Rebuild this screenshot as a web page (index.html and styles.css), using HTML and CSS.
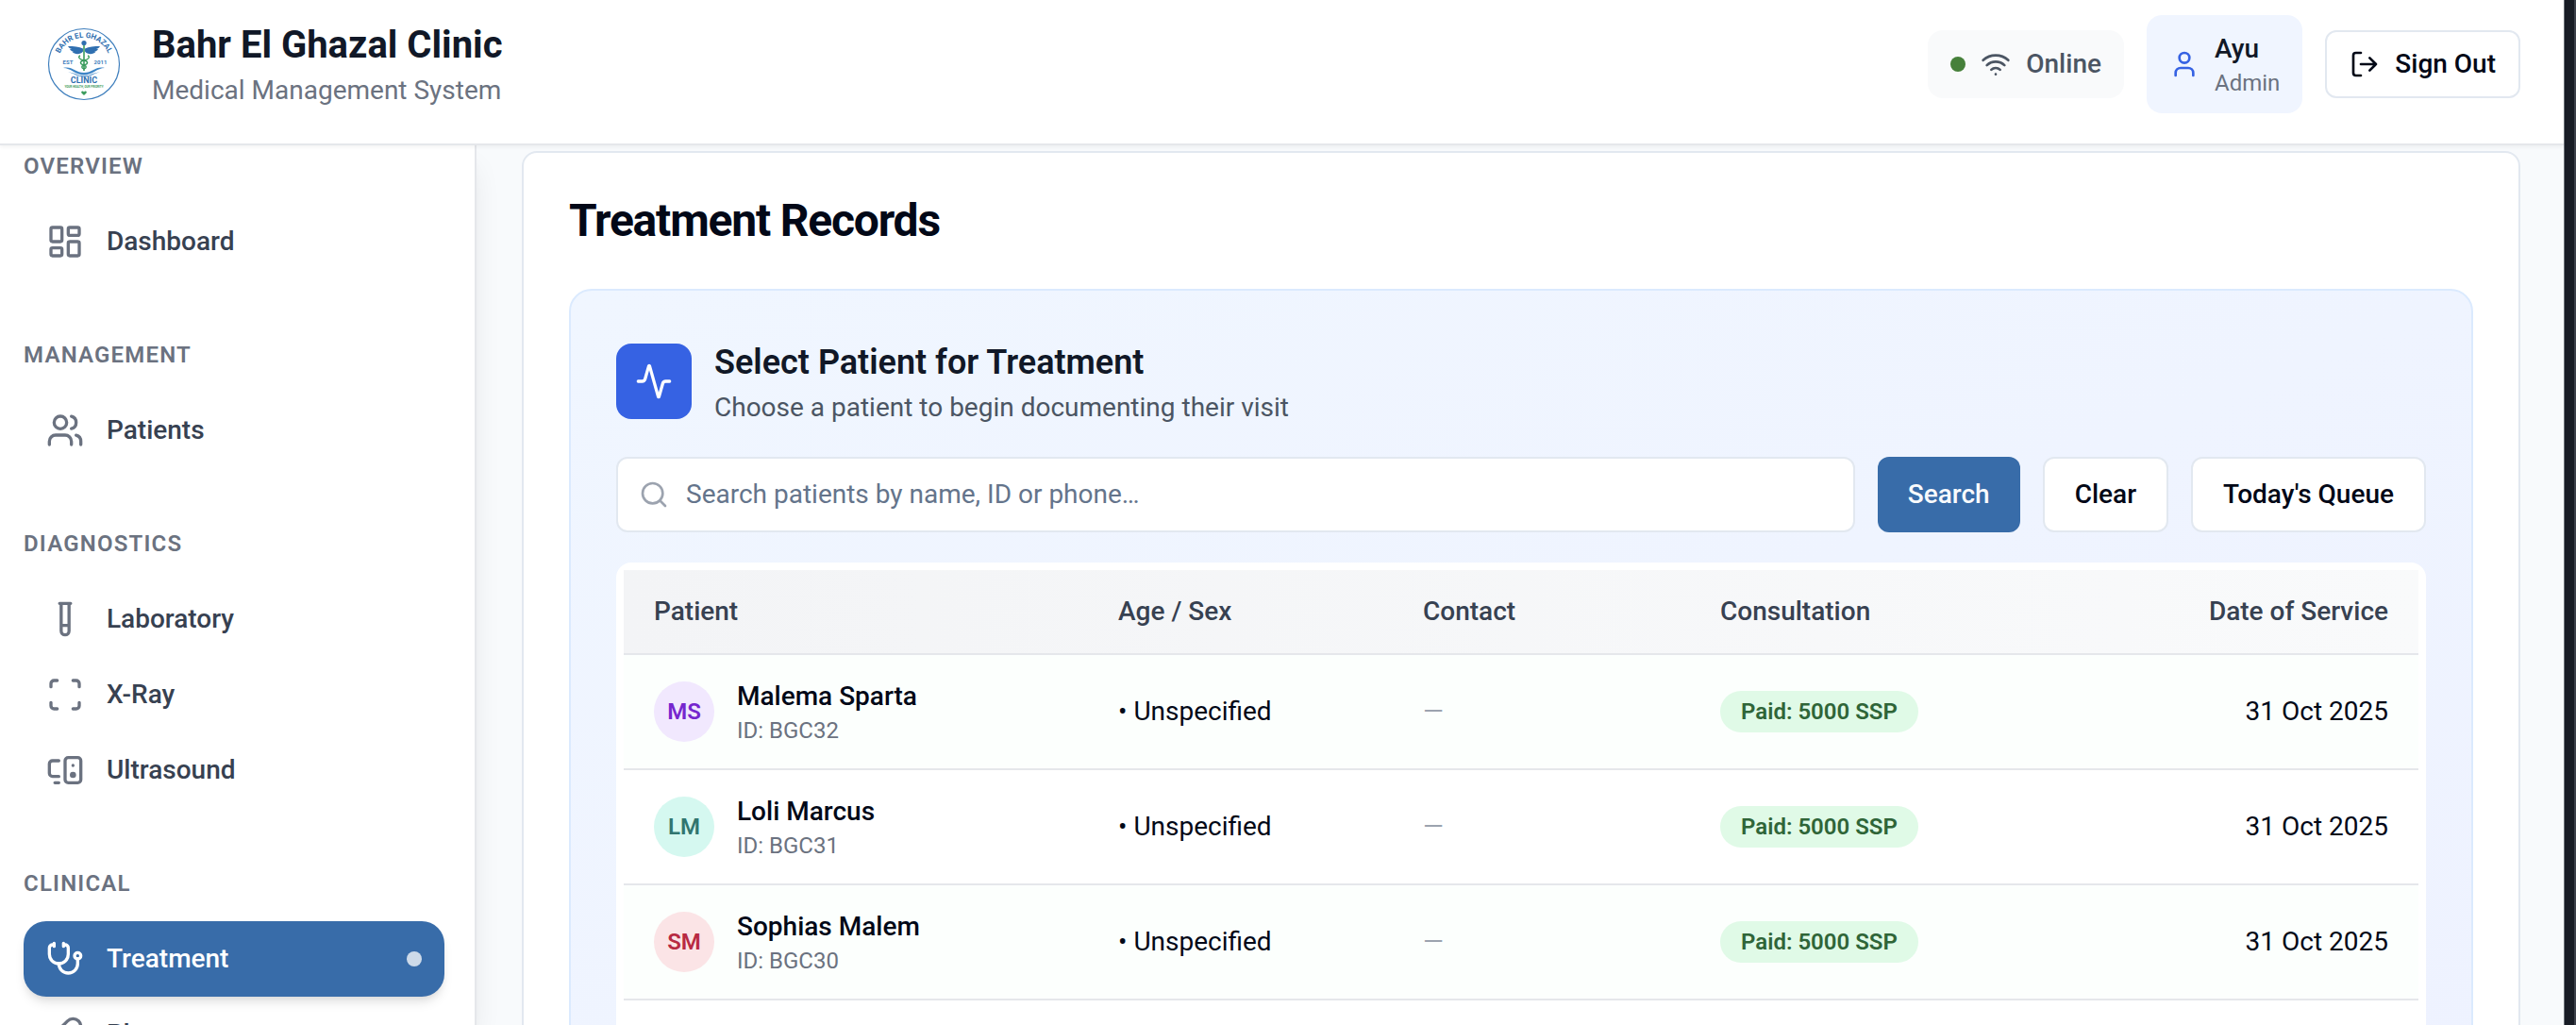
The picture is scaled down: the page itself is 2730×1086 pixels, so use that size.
FILE: index.html
```html
<!DOCTYPE html>
<html lang="en">
<head>
<meta charset="utf-8">
<meta name="viewport" content="width=device-width, initial-scale=1">
<title>Bahr El Ghazal Clinic</title>
<link rel="stylesheet" href="styles.css">
</head>
<body>
<div class="window">
<div class="app">
  <header class="topbar">
    <div class="brand">
      <svg class="brand-logo" viewBox="0 0 80 80" role="img" aria-label="Clinic logo">
        <defs><path id="arc" d="M13.500 45A28 28 0 1 1 68.500 45"/></defs>
        <circle cx="41" cy="40" r="37.500" fill="#fff" stroke="#3f7fbd" stroke-width="1.200"/>
        <text class="logo-arc"><textPath href="#arc" startOffset="50%" text-anchor="middle">BAHR EL GHAZAL</textPath></text>
        <circle cx="41" cy="17.500" r="2.600" fill="#2f6fb0"/>
        <path fill="#2f6fb0" d="M40 23.500c-4-2-10-2.500-16-2.500 1 2 3 2.800 4.500 3-1.200.2-2 .1-2.500 0 1 2 2.800 2.600 4.200 2.600-.8.3-1.300.3-1.800.2 2.500 3.200 9 3.400 11.600-.3zM42 23.500c4-2 10-2.500 16-2.500-1 2-3 2.800-4.500 3 1.200.2 2 .1 2.500 0-1 2-2.800 2.600-4.200 2.600.8.3 1.300.3 1.800.2-2.500 3.200-9 3.400-11.600-.3z"/>
        <path d="M41 20v27" stroke="#3a9b5c" stroke-width="1.600"/>
        <path d="M37 31c-2.500 1-1.500 4 4 5 5 1 4.500 4 0 5-3 1-3 3 0 4M45 31c2.500 1 1.500 4-4 5-5 1-4.500 4 0 5 3 1 3 3 0 4" fill="none" stroke="#3a9b5c" stroke-width="1.400"/>
        <path d="M19 44c9-2.500 13 5 22 5s13-7.500 22-5c-8 0-13 7.500-22 7.500S27 44 19 44z" fill="#3f86c6"/>
        <path d="M24 48.500c7 0 10 4 17 4s10-4 17-4c-7 1-10 5-17 5s-10-4-17-5z" fill="#3f86c6"/>
        <text class="logo-year" x="24" y="39.500">EST</text>
        <text class="logo-year" x="58.500" y="39.500">2011</text>
        <text class="logo-word" x="41" y="60">CLINIC</text>
        <text class="logo-motto" x="41" y="65">YOUR HEALTH, OUR PRIORITY</text>
        <path d="M41 73l-2.600-2.500c-1-2 1.600-2.800 2.600-1 1-1.800 3.600-1 2.600 1z" fill="#3a9b5c"/>
      </svg>
      <div>
        <h1 class="brand-name">Bahr El Ghazal Clinic</h1>
        <p class="brand-sub">Medical Management System</p>
      </div>
    </div>
    <div class="topbar-actions">
      <div class="status">
        <span class="status-dot"></span>
        <svg class="icon icon-sm" viewBox="0 0 24 24"><path d="M12 20h.01M2 8.820a15 15 0 0 1 20 0M5 12.859a10 10 0 0 1 14 0M8.500 16.429a5 5 0 0 1 7 0"/></svg>
        <span>Online</span>
      </div>
      <div class="user">
        <svg class="icon icon-sm user-icon" viewBox="0 0 24 24"><path d="M19 21v-2a4 4 0 0 0-4-4H9a4 4 0 0 0-4 4v2"/><circle cx="12" cy="7" r="4"/></svg>
        <div>
          <p class="user-name">Ayu</p>
          <p class="user-role">Admin</p>
        </div>
      </div>
      <button type="button" class="btn btn-small">
        <svg class="icon icon-sm" viewBox="0 0 24 24"><path d="M9 21H5a2 2 0 0 1-2-2V5a2 2 0 0 1 2-2h4M16 17l5-5-5-5M21 12H9"/></svg>
        Sign Out
      </button>
    </div>
  </header>

  <div class="body">
    <nav class="sidebar" aria-label="Main">
      <section class="nav-group">
        <h2 class="nav-label">Overview</h2>
        <a class="nav-item" href="#dashboard">
          <svg class="icon" viewBox="0 0 24 24"><rect x="3" y="3" width="7" height="9" rx="1"/><rect x="14" y="3" width="7" height="5" rx="1"/><rect x="14" y="12" width="7" height="9" rx="1"/><rect x="3" y="16" width="7" height="5" rx="1"/></svg>
          Dashboard
        </a>
      </section>
      <section class="nav-group">
        <h2 class="nav-label">Management</h2>
        <a class="nav-item" href="#patients">
          <svg class="icon" viewBox="0 0 24 24"><path d="M16 21v-2a4 4 0 0 0-4-4H6a4 4 0 0 0-4 4v2"/><circle cx="9" cy="7" r="4"/><path d="M22 21v-2a4 4 0 0 0-3-3.870M16 3.130a4 4 0 0 1 0 7.750"/></svg>
          Patients
        </a>
      </section>
      <section class="nav-group">
        <h2 class="nav-label">Diagnostics</h2>
        <a class="nav-item" href="#laboratory">
          <svg class="icon" viewBox="0 0 24 24"><path d="M14.500 2v17.500c0 1.400-1.100 2.500-2.500 2.500s-2.500-1.100-2.500-2.500V2M8.500 2h7M14.500 16h-5"/></svg>
          Laboratory
        </a>
        <a class="nav-item" href="#xray">
          <svg class="icon" viewBox="0 0 24 24"><path d="M3 7V5a2 2 0 0 1 2-2h2M17 3h2a2 2 0 0 1 2 2v2M21 17v2a2 2 0 0 1-2 2h-2M7 21H5a2 2 0 0 1-2-2v-2"/></svg>
          X-Ray
        </a>
        <a class="nav-item" href="#ultrasound">
          <svg class="icon" viewBox="0 0 24 24"><path d="M5.500 20H8M17 9h.01"/><rect x="12" y="4" width="10" height="16" rx="2"/><path d="M8 6H4a2 2 0 0 0-2 2v6a2 2 0 0 0 2 2h4"/><circle cx="17" cy="15" r="1"/></svg>
          Ultrasound
        </a>
      </section>
      <section class="nav-group">
        <h2 class="nav-label">Clinical</h2>
        <a class="nav-item is-active" href="#treatment" aria-current="page">
          <svg class="icon" viewBox="0 0 24 24"><path d="M11 2v2M5 2v2M5 3H4a2 2 0 0 0-2 2v4a6 6 0 0 0 12 0V5a2 2 0 0 0-2-2h-1"/><path d="M8 15a6 6 0 0 0 12 0v-3"/><circle cx="20" cy="10" r="2"/></svg>
          Treatment
          <span class="nav-dot"></span>
        </a>
        <a class="nav-item" href="#pharmacy">
          <svg class="icon" viewBox="0 0 24 24"><path d="m10.500 20.500 10-10a4.950 4.950 0 1 0-7-7l-10 10a4.950 4.950 0 1 0 7 7ZM8.500 8.500l7 7"/></svg>
          Pharmacy
        </a>
      </section>
    </nav>

    <main class="content">
      <section class="card">
        <h2 class="card-title">Treatment Records</h2>
        <div class="panel">
          <div class="panel-head">
            <span class="panel-badge">
              <svg class="icon" viewBox="0 0 24 24"><path d="M22 12h-2.480a2 2 0 0 0-1.930 1.460l-2.350 8.360a.25.25 0 0 1-.48 0L9.240 2.180a.25.25 0 0 0-.48 0l-2.350 8.360A2 2 0 0 1 4.490 12H2"/></svg>
            </span>
            <div>
              <h3 class="panel-title">Select Patient for Treatment</h3>
              <p class="panel-sub">Choose a patient to begin documenting their visit</p>
            </div>
          </div>

          <form class="search">
            <label class="search-box">
              <svg class="icon icon-sm" viewBox="0 0 24 24"><circle cx="11" cy="11" r="8"/><path d="m21 21-4.300-4.300"/></svg>
              <input class="search-input" type="text" aria-label="Search patients" placeholder="Search patients by name, ID or phone…">
            </label>
            <button type="button" class="btn btn-primary">Search</button>
            <button type="button" class="btn">Clear</button>
            <button type="button" class="btn">Today's Queue</button>
          </form>

          <div class="table-wrap">
            <table class="table">
              <colgroup><col class="col-patient"><col class="col-age"><col class="col-contact"><col></colgroup>
              <colgroup><col></colgroup>
              <thead>
                <tr><th>Patient</th><th>Age / Sex</th><th>Contact</th><th>Consultation</th><th class="right">Date of Service</th></tr>
              </thead>
              <tbody>
                <tr>
                  <td><div class="patient"><span class="avatar avatar-purple">MS</span><div><p class="patient-name">Malema Sparta</p><p class="patient-id">ID: BGC32</p></div></div></td>
                  <td>• Unspecified</td><td class="muted">—</td><td><span class="pill">Paid: 5000 SSP</span></td><td class="right">31 Oct 2025</td>
                </tr>
                <tr>
                  <td><div class="patient"><span class="avatar avatar-teal">LM</span><div><p class="patient-name">Loli Marcus</p><p class="patient-id">ID: BGC31</p></div></div></td>
                  <td>• Unspecified</td><td class="muted">—</td><td><span class="pill">Paid: 5000 SSP</span></td><td class="right">31 Oct 2025</td>
                </tr>
                <tr>
                  <td><div class="patient"><span class="avatar avatar-rose">SM</span><div><p class="patient-name">Sophias Malem</p><p class="patient-id">ID: BGC30</p></div></div></td>
                  <td>• Unspecified</td><td class="muted">—</td><td><span class="pill">Paid: 5000 SSP</span></td><td class="right">31 Oct 2025</td>
                </tr>
              </tbody>
            </table>
          </div>
        </div>
      </section>
    </main>
  </div>
</div>
<div class="window-edge"></div>
</div>
</body>
</html>
```
FILE: styles.css
```css
*, *::before, *::after { box-sizing: border-box; }

body, h1, h2, h3, p { margin: 0; }

body {
  font-family: Roboto, "Liberation Sans", sans-serif;
  font-size: 28px;
  line-height: 40px;
  color: #020817;
  background: #f8fafc;
}

.window { display: flex; height: 100vh; overflow: hidden; }
.window-edge {
  flex: none;
  width: 13px;
  background: #181c25;
  border-left: 1px solid #6b7078;
  border-right: 2px solid #3c404a;
}
.app { flex: 1; min-width: 0; display: flex; flex-direction: column; }

.icon {
  flex: none;
  width: 40px;
  height: 40px;
  fill: none;
  stroke: currentColor;
  stroke-width: 2;
  stroke-linecap: round;
  stroke-linejoin: round;
}
.icon-sm { width: 32px; height: 32px; }

/* Top bar */
.topbar {
  position: relative;
  z-index: 2;
  flex: none;
  display: flex;
  align-items: center;
  justify-content: space-between;
  padding: 16px 46px 32px 48px;
  background: #fff;
  border-bottom: 2px solid #e5e7eb;
  box-shadow: 0 2px 4px rgba(0, 0, 0, 0.05);
}
.brand { display: flex; align-items: center; gap: 33px; }
.brand-logo { width: 80px; height: 80px; }
.logo-arc { font-size: 8px; font-weight: 700; fill: #2f6fb0; }
.logo-year { font-size: 6px; font-weight: 700; fill: #3f7fbd; text-anchor: middle; }
.logo-word { font-size: 9px; font-weight: 700; fill: #2f6fb0; text-anchor: middle; }
.logo-motto { font-size: 3px; font-weight: 700; fill: #3a9b5c; text-anchor: middle; }
.brand-name { font-size: 40px; line-height: 56px; font-weight: 700; color: #111827; }
.brand-sub { color: #6b7280; }

.topbar-actions { display: flex; align-items: center; gap: 24px; }
.status {
  display: flex;
  align-items: center;
  gap: 16px;
  padding: 16px 24px;
  border-radius: 16px;
  background: #f9fafb;
  color: #4b5563;
  font-weight: 500;
}
.status-dot { width: 16px; height: 16px; border-radius: 50%; background: #46803a; }
.user {
  display: flex;
  align-items: center;
  gap: 16px;
  padding: 16px 24px;
  border-radius: 16px;
  background: #f0f5ff;
}
.user-icon { color: #3662e3; }
.user-name { font-weight: 500; color: #111827; }
.user-role { font-size: 24px; line-height: 32px; color: #6b7280; }

.btn {
  flex: none;
  display: inline-flex;
  align-items: center;
  justify-content: center;
  gap: 16px;
  height: 80px;
  padding: 0 32px;
  border: 2px solid #e2e8f0;
  border-radius: 12px;
  background: #fff;
  color: #020817;
  font: inherit;
  font-weight: 500;
}
.btn-small { height: 72px; padding: 0 24px; }
.btn-primary { border: 0; background: #386ca9; color: #f8fafc; }

/* Sidebar */
.body { flex: 1; min-height: 0; display: flex; }
.sidebar {
  position: relative;
  z-index: 1;
  flex: none;
  display: flex;
  flex-direction: column;
  gap: 64px;
  width: 505px;
  padding: 6px 32px 0 25px;
  background: #fff;
  border-right: 2px solid #e5e7eb;
  box-shadow: 0 20px 30px -6px rgba(0, 0, 0, 0.1), 0 8px 12px -8px rgba(0, 0, 0, 0.1);
}
.nav-label {
  margin-bottom: 24px;
  font-size: 24px;
  line-height: 32px;
  font-weight: 600;
  letter-spacing: 0.05em;
  text-transform: uppercase;
  color: #6b7280;
}
.nav-item {
  display: flex;
  align-items: center;
  gap: 24px;
  padding: 20px 24px;
  border-radius: 24px;
  color: #374151;
  font-weight: 500;
  text-decoration: none;
}
.nav-item .icon { color: #6b7280; }
.nav-item.is-active {
  background: #386ca9;
  color: #fff;
  box-shadow: 0 8px 12px -2px rgba(0, 0, 0, 0.1), 0 4px 8px -4px rgba(0, 0, 0, 0.1);
}
.nav-item.is-active .icon { color: #fff; }
.nav-dot { width: 16px; height: 16px; margin-left: auto; border-radius: 50%; background: #fff; opacity: 0.75; }

/* Content */
.content { flex: 1; min-width: 0; padding: 6px 46px 48px 48px; overflow: hidden; }
.card { padding: 48px; background: #fff; border: 2px solid #e2e8f0; border-radius: 16px; }
.card-title {
  margin-bottom: 48px;
  font-size: 48px;
  line-height: 48px;
  font-weight: 700;
  letter-spacing: -0.025em;
}
.panel {
  padding: 48px;
  border: 2px solid #dbeafe;
  border-radius: 24px;
  background: linear-gradient(to bottom right, #f0f6ff, #eef2ff);
}
.panel-head { display: flex; align-items: center; gap: 24px; margin-bottom: 32px; }
.panel-badge {
  display: grid;
  place-items: center;
  width: 80px;
  height: 80px;
  border-radius: 16px;
  background: #3662e3;
  color: #fff;
}
.panel-title { font-size: 36px; line-height: 56px; font-weight: 600; color: #111827; }
.panel-sub { color: #4b5563; }

.search { display: flex; gap: 24px; margin-bottom: 32px; }
.search-box {
  flex: 1;
  display: flex;
  align-items: center;
  gap: 18px;
  height: 80px;
  padding: 0 22px;
  border: 2px solid #e2e8f0;
  border-radius: 12px;
  background: #fff;
  color: #9ca3af;
}
.search-input {
  flex: 1;
  min-width: 0;
  padding: 0;
  border: 0;
  outline: 0;
  background: none;
  font: inherit;
  color: #020817;
}
.search-input::placeholder { color: #64748b; opacity: 1; }

.table-wrap { padding: 8px 8px 64px; border-radius: 16px; background: #fff; }
.table { width: 100%; table-layout: fixed; border-collapse: separate; border-spacing: 0; }
.col-patient { width: 492px; }
.col-age { width: 323px; }
.col-contact { width: 315px; }
.table thead tr { background: linear-gradient(to right, #f3f4f6, #f9fafb); }
.table th {
  padding: 24px 32px;
  border-bottom: 2px solid #e5e7eb;
  text-align: left;
  font-weight: 500;
  color: #374151;
}
.table td { padding: 24px 32px; border-bottom: 2px solid #e5e7eb; }
.table tbody tr:nth-child(odd) { background: #fcfffd; }
.table .right { text-align: right; }
.table .muted { color: #9ca3af; }

.patient { display: flex; align-items: center; gap: 24px; }
.patient-name { font-weight: 500; }
.patient-id { font-size: 24px; line-height: 32px; color: #6b7280; }
.avatar {
  flex: none;
  display: grid;
  place-items: center;
  width: 64px;
  height: 64px;
  border-radius: 50%;
  font-size: 24px;
  font-weight: 600;
}
.avatar-purple { background: #f1e8fe; color: #7626ce; }
.avatar-teal { background: #d5f8f0; color: #31756f; }
.avatar-rose { background: #fbe4e6; color: #b82a42; }
.pill {
  display: inline-block;
  padding: 6px 22px;
  border-radius: 22px;
  background: #e0fae7;
  font-size: 24px;
  line-height: 32px;
  font-weight: 600;
  color: #2f6538;
}
```
